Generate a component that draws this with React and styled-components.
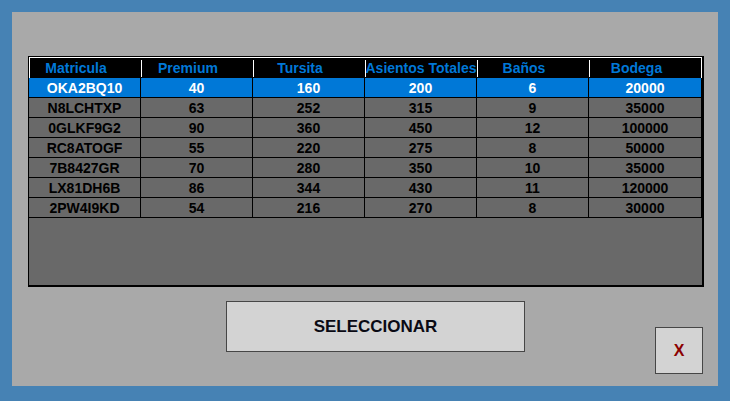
import styled, { createGlobalStyle } from 'styled-components'

const GlobalStyle = createGlobalStyle`
  html, body {
    margin: 0;
    padding: 0;
    background: #4682b4;
    font-family: 'Liberation Sans', Arial, sans-serif;
  }
`

const COLUMNS = [
  { key: 'matricula', label: 'Matricula' },
  { key: 'premium', label: 'Premium' },
  { key: 'turista', label: 'Tursita' },
  { key: 'asientos', label: 'Asientos Totales', wide: true },
  { key: 'banos', label: 'Baños' },
  { key: 'bodega', label: 'Bodega' }
]

const ROWS = [
  ['OKA2BQ10', 40, 160, 200, 6, 20000],
  ['N8LCHTXP', 63, 252, 315, 9, 35000],
  ['0GLKF9G2', 90, 360, 450, 12, 100000],
  ['RC8ATOGF', 55, 220, 275, 8, 50000],
  ['7B8427GR', 70, 280, 350, 10, 35000],
  ['LX81DH6B', 86, 344, 430, 11, 120000],
  ['2PW4I9KD', 54, 216, 270, 8, 30000]
]

const Window = styled.div`
  width: 730px;
  height: 401px;
  padding: 12px 12px 15px 12px;
  box-sizing: border-box;
`

const Panel = styled.div`
  height: 100%;
  background: #a9a9a9;
  padding: 44px 14px 0 16px;
  box-sizing: border-box;
  display: flex;
  flex-direction: column;
`

const Grid = styled.div`
  width: 676px;
  height: 231px;
  box-sizing: border-box;
  border-style: solid;
  border-color: #000;
  border-width: 1px 2px 2px 1px;
  background: #696969;
  overflow: hidden;
`

const columnsTemplate = `repeat(5, 112px) 1fr`

const HeaderRow = styled.div`
  display: grid;
  grid-template-columns: ${columnsTemplate};
  height: 20px;
  border-top: 1px solid #fff;
  background: #000;
  box-shadow: inset 1px 0 0 #fff, inset -1px 0 0 #fff;
`

const HeaderCell = styled.div`
  position: relative;
  display: flex;
  align-items: center;
  justify-content: center;
  padding-right: ${p => (p.$wide ? '0' : '18px')};
  color: #0078d7;
  font-size: 14px;
  font-weight: bold;
  white-space: nowrap;
  overflow: hidden;

  &::before {
    content: '';
    display: ${p => (p.$first ? 'none' : 'block')};
    position: absolute;
    left: 0;
    top: 2px;
    bottom: 1px;
    width: 1px;
    background: #fff;
    z-index: 1;
  }
`

const Row = styled.div`
  display: grid;
  grid-template-columns: ${columnsTemplate};
  height: 20px;
  background: ${p => (p.$selected ? '#0078d7' : '#696969')};
  color: ${p => (p.$selected ? '#fff' : '#000')};
`

const Cell = styled.div`
  display: flex;
  align-items: center;
  justify-content: center;
  box-sizing: border-box;
  border-right: 1px solid #000;
  border-bottom: 1px solid #000;
  font-size: 14px;
  font-weight: bold;
  white-space: nowrap;
  overflow: hidden;
`

const Footer = styled.div`
  display: flex;
  align-items: flex-start;
  padding: 14px 0 0 198px;
`

const SelectButton = styled.button`
  width: 299px;
  height: 51px;
  background: #d3d3d3;
  border: 1px solid #464646;
  box-sizing: border-box;
  font-family: 'Liberation Sans', Arial, sans-serif;
  font-size: 17px;
  font-weight: bold;
  color: #0a0a14;
  padding: 0;
`

const CloseButton = styled.button`
  width: 48px;
  height: 47px;
  margin: 26px 1px 0 auto;
  background: #d3d3d3;
  border: 1px solid #464646;
  box-sizing: border-box;
  font-family: 'Liberation Sans', Arial, sans-serif;
  font-size: 16px;
  font-weight: bold;
  color: #8b0000;
  padding: 0;
`

export default function App() {
  return (
    <>
      <GlobalStyle />
      <Window>
        <Panel>
          <Grid>
            <HeaderRow>
              {COLUMNS.map((col, i) => (
                <HeaderCell key={col.key} $first={i === 0} $wide={col.wide}>
                  {col.label}
                </HeaderCell>
              ))}
            </HeaderRow>
            {ROWS.map((row, r) => (
              <Row key={row[0]} $selected={r === 0}>
                {row.map((value, c) => (
                  <Cell key={COLUMNS[c].key}>{value}</Cell>
                ))}
              </Row>
            ))}
          </Grid>
          <Footer>
            <SelectButton type="button">SELECCIONAR</SelectButton>
            <CloseButton type="button">X</CloseButton>
          </Footer>
        </Panel>
      </Window>
    </>
  )
}
